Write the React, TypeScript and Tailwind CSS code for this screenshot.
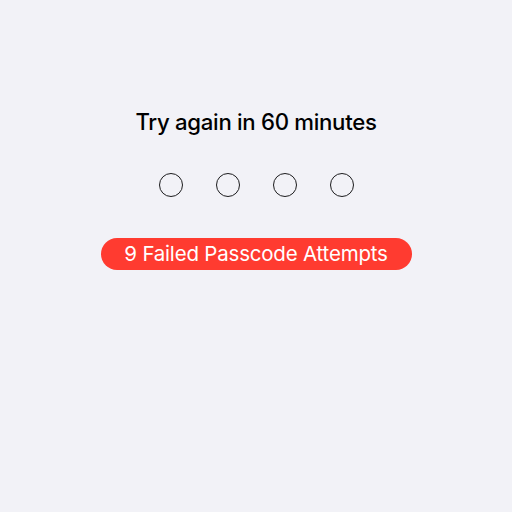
import React from "react";

const App: React.FC = () => {
  const dots = [0, 1, 2, 3];

  return (
    <div
      className="w-[512px] h-[512px] bg-[#f2f2f7] flex flex-col items-center"
      style={{ fontFamily: "Inter, 'Noto Sans', sans-serif" }}
    >
      <h1 className="mt-[108px] text-[22.2px] leading-[28px] font-medium text-black tracking-[-0.3px]">
        Try again in 60 minutes
      </h1>

      <div className="mt-[37px] flex gap-[33px]">
        {dots.map((d) => (
          <div
            key={d}
            className="w-[24px] h-[24px] rounded-full border-[1.5px] border-[#1c1c1e]"
          />
        ))}
      </div>

      <div className="mt-[41px] w-[311px] h-[32px] rounded-full bg-[#ff3b30] flex items-center justify-center">
        <span className="text-[20.5px] text-white tracking-[-0.2px]">
          9 Failed Passcode Attempts
        </span>
      </div>
    </div>
  );
};

export default App;
